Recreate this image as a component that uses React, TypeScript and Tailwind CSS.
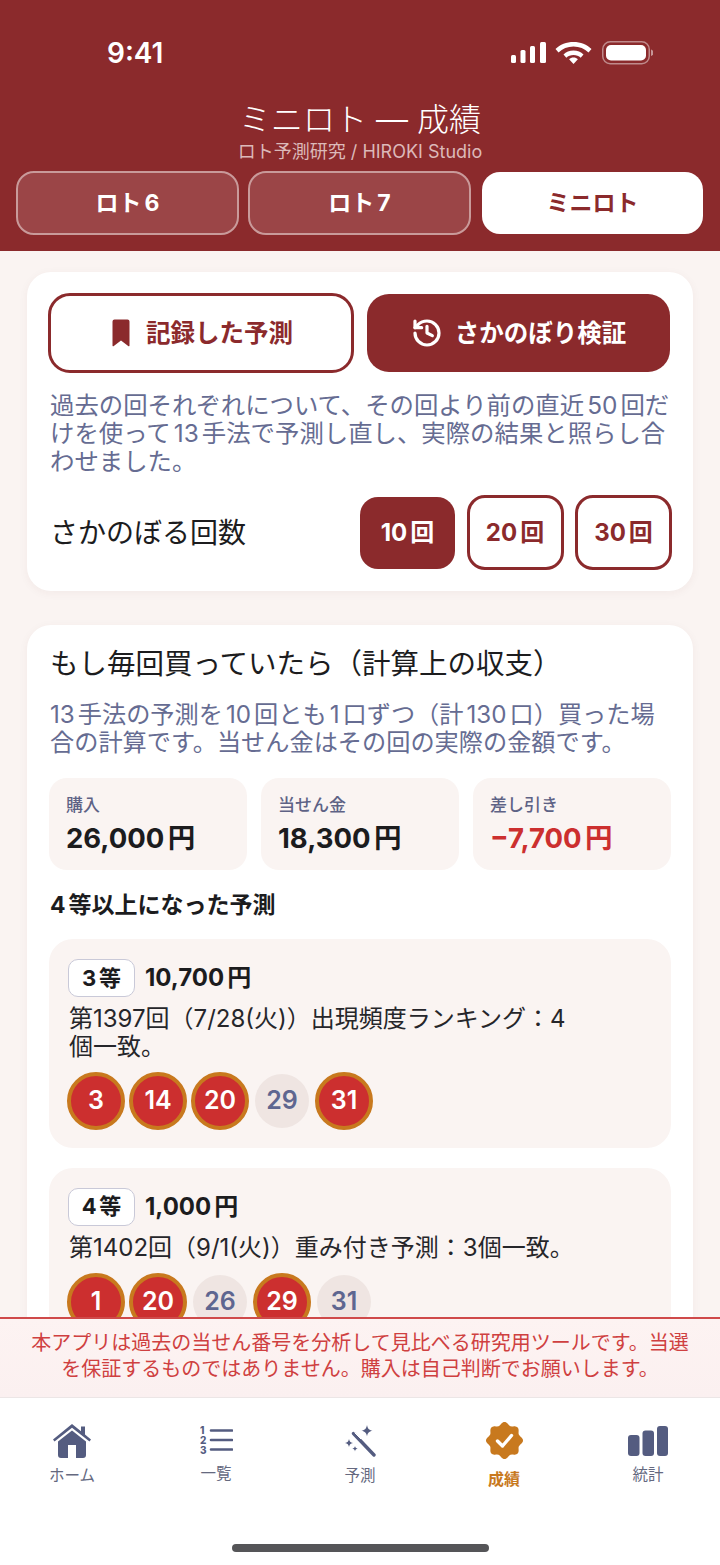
import { History } from "lucide-react";

const font = { fontFamily: '"Inter", "Noto Sans CJK JP", sans-serif' };

const results = [
  {
    grade: "3等",
    prize: "10,700円",
    text: "第1397回（7/28(火)）出現頻度ランキング：4個一致。",
    balls: [
      { n: 3, hit: true },
      { n: 14, hit: true },
      { n: 20, hit: true },
      { n: 29, hit: false },
      { n: 31, hit: true },
    ],
  },
  {
    grade: "4等",
    prize: "1,000円",
    text: "第1402回（9/1(火)）重み付き予測：3個一致。",
    balls: [
      { n: 1, hit: true },
      { n: 20, hit: true },
      { n: 26, hit: false },
      { n: 29, hit: true },
      { n: 31, hit: false },
    ],
  },
];

// wavy 8-lobed outline of the "verified" badge
const badgePath = (() => {
  const pts: string[] = [];
  for (let i = 0; i < 160; i++) {
    const t = (i / 160) * Math.PI * 2;
    const r = 17 + 1.500 * Math.cos(8 * t);
    const x = 18.500 + r * Math.sin(t);
    const y = 18.500 - r * Math.cos(t);
    pts.push(`${i === 0 ? "M" : "L"}${x.toFixed(2)} ${y.toFixed(2)}`);
  }
  return pts.join("") + "Z";
})();

function StatusBar() {
  return (
    <div className="flex h-[100px] items-start justify-between pl-[107px] pr-[67px] pt-[37px]">
      <span className="text-[28px] font-semibold leading-[32px] text-white">9:41</span>
      <svg width="143" height="24" viewBox="0 0 143 24" className="mt-[4px]" fill="white">
        <rect x="1" y="14" width="5" height="8" rx="1.500" />
        <rect x="10.500" y="9" width="5" height="13" rx="1.500" />
        <rect x="20" y="5" width="5" height="17" rx="1.500" />
        <rect x="30" y="1" width="6" height="21" rx="1.500" />
        <path d="M64 7.500c-6 0-11 2.200-15 6l-3-3.500C50.500 5.500 57 3 64 3c7 0 13.500 2.500 18 7l-3 3.500c-4-3.800-9-6-15-6z" transform="translate(-.5 -2)" />
        <path d="M64 11c-4 0-7.500 1.500-10 4l2.800 3.200c1.900-1.800 4.300-2.800 7.200-2.800s5.300 1 7.200 2.800L74 15c-2.500-2.500-6-4-10-4z" transform="translate(-.5 -1.500)" />
        <path d="M64 17.500c-1.800 0-3.200.7-4.400 1.700L64 24l4.400-4.800c-1.200-1-2.600-1.700-4.400-1.700z" transform="translate(-.5 -1)" />
        <rect x="92.750" y="0.750" width="46.500" height="22" rx="7.500" fill="none" stroke="white" strokeOpacity="0.45" strokeWidth="1.500" />
        <rect x="96" y="4" width="40" height="15.500" rx="5" />
        <path d="M141 8.500c1.500.5 2.500 1.700 2.500 3.200S142.500 14.500 141 15z" fillOpacity="0.5" />
      </svg>
    </div>
  );
}

function Ball({ n, hit }: { n: number; hit: boolean }) {
  return (
    <div className="flex h-[58px] w-[58px] items-center justify-center">
      {hit ? (
        <div className="flex h-[58px] w-[58px] items-center justify-center rounded-full border-[4px] border-[#c8791e] bg-[#cc2f2f] text-[25px] font-semibold text-white">
          {n}
        </div>
      ) : (
        <div className="flex h-[54px] w-[54px] items-center justify-center rounded-full bg-[#efe5e2] text-[25px] font-semibold text-[#5e6690]">
          {n}
        </div>
      )}
    </div>
  );
}

function ModeButton({ active, icon, label }: { active: boolean; icon: React.ReactNode; label: string }) {
  return (
    <button
      className={
        active
          ? "flex h-[78px] w-[303px] items-center justify-center gap-[12px] rounded-[22px] bg-[#8b2a2c] text-[24.500px] font-bold text-white"
          : "flex h-[80px] w-[306px] items-center justify-center gap-[12px] rounded-[22px] border-[3px] border-[#8b2a2c] bg-white text-[24.500px] font-bold text-[#8b2a2c]"
      }
    >
      {icon}
      {label}
    </button>
  );
}

function BookmarkIcon() {
  return (
    <svg width="25" height="28" viewBox="0 0 25 28" fill="#8b2a2c">
      <path d="M5.500.5h13a2 2 0 0 1 2 2v24a.8.8 0 0 1-1.300.6L12 21.500l-7.200 5.600a.8.8 0 0 1-1.300-.6v-24a2 2 0 0 1 2-2z" />
    </svg>
  );
}

function HomeIcon() {
  return (
    <svg width="38" height="34" viewBox="0 0 38 34" fill="#545c80">
      <path d="M0 15.500 19 0l9 7.300V2.500h4v8.100l6 4.900-1.500 2L19 3.700 1.500 17.500z" />
      <path fillRule="evenodd" d="M5 17.500 19 6.500l14 11V31a3 3 0 0 1-3 3H8a3 3 0 0 1-3-3zM15 21v13h8V21z" />
    </svg>
  );
}

function ListIcon() {
  return (
    <svg width="33" height="33" viewBox="0 -2 33 33">
      <g stroke="#545c80" strokeWidth="2.600" strokeLinecap="round">
        <path d="M11 4.500h21M11 14h21M11 23.500h21" />
      </g>
      <g fill="#545c80" fontSize="10" fontWeight="800" fontFamily="Inter, sans-serif">
        <text x="0" y="8">1</text>
        <text x="0" y="18">2</text>
        <text x="0" y="28">3</text>
      </g>
    </svg>
  );
}

function WandIcon() {
  return (
    <svg width="32" height="32" viewBox="0 0 32 32">
      <path d="M9.500 8.500 30 30" stroke="#545c80" strokeWidth="3.400" strokeLinecap="round" />
      <path d="M10.500 7.500 17 14" stroke="white" strokeWidth="1" />
      <g fill="#545c80">
        <path d="M23 0c.7 3.600 1.900 5 5.500 5.700-3.600.7-4.800 2-5.500 5.600-.7-3.600-1.900-4.900-5.500-5.600C21.100 5 22.300 3.600 23 0z" />
        <path d="M5 14c.5 2.500 1.300 3.500 4 4-2.700.5-3.500 1.500-4 4-.5-2.500-1.300-3.500-4-4 2.700-.5 3.500-1.500 4-4z" />
        <path d="M11 21c.3 1.700.9 2.300 2.700 2.700-1.800.3-2.400.9-2.700 2.700-.3-1.800-.9-2.400-2.700-2.700 1.800-.4 2.400-1 2.700-2.700z" />
      </g>
    </svg>
  );
}

function BadgeIcon() {
  return (
    <svg width="37" height="37" viewBox="0 0 37 37">
      <path fill="#c8791e" d={badgePath} />
      <path d="M11.500 19l5 5 9-10.500" fill="none" stroke="white" strokeWidth="3.400" strokeLinecap="round" strokeLinejoin="round" />
    </svg>
  );
}

function BarsIcon() {
  return (
    <svg width="40" height="30" viewBox="0 0 40 30" fill="#545c80">
      <rect x="0" y="9" width="11.500" height="21" rx="3" />
      <rect x="14.500" y="4.500" width="11.500" height="25.500" rx="3" />
      <rect x="29" y="0" width="11" height="30" rx="3" />
    </svg>
  );
}

export default function App() {
  return (
    <div className="flex h-[1565px] w-[720px] flex-col overflow-hidden bg-[#faf4f2] text-[#1c1c1e] [text-autospace:normal]" style={font}>
      {/* Header */}
      <header className="h-[251px] shrink-0 bg-[#8b2a2c]">
        <StatusBar />
        <div className="text-center">
          <h1 className="text-[32px] font-light leading-[40px] text-white">ミニロト — 成績</h1>
          <p className="mt-[1px] text-[18px] leading-[21px] text-[#dcb9b9]">ロト予測研究 / HIROKI Studio</p>
        </div>
        <div className="mt-[9px] flex items-center gap-[9px] pl-[16px]">
          <button className="h-[64px] w-[223px] rounded-[18px] border-2 border-[#c99a9a] bg-[#9b4547] text-[23px] font-bold text-white">ロト6</button>
          <button className="h-[64px] w-[223px] rounded-[18px] border-2 border-[#c99a9a] bg-[#9b4547] text-[23px] font-bold text-white">ロト7</button>
          <button className="ml-[2px] h-[62px] w-[221px] rounded-[18px] bg-white text-[23px] font-bold text-[#8b2a2c]">ミニロト</button>
        </div>
      </header>

      {/* Scrolling content */}
      <main className="min-h-0 flex-1 overflow-hidden px-[27px] pt-[21px]">
        <section className="rounded-[24px] bg-white pb-[21px] pl-[21px] pr-[21px] pt-[21px] shadow-[0_2px_10px_rgba(90,40,40,0.05)]">
          <div className="flex items-center gap-[13px]">
            <ModeButton active={false} icon={<BookmarkIcon />} label="記録した予測" />
            <ModeButton active icon={<History size={32} strokeWidth={2.400} />} label="さかのぼり検証" />
          </div>
          <p className="mt-[18px] pl-[2px] text-[24.400px] leading-[28px] text-[#666c92]">
            過去の回それぞれについて、その回より前の直近50回だけを使って13手法で予測し直し、実際の結果と照らし合わせました。
          </p>
          <div className="mt-[20px] flex items-center justify-between">
            <span className="pl-[2px] text-[28px] leading-[32px]">さかのぼる回数</span>
            <div className="flex items-center gap-[11.500px]">
              <button className="h-[72px] w-[95px] rounded-[18px] bg-[#8b2a2c] text-[24px] font-bold text-white">10回</button>
              <button className="h-[75px] w-[97px] rounded-[18px] border-[3px] border-[#8b2a2c] bg-white text-[24px] font-bold text-[#8b2a2c]">20回</button>
              <button className="h-[75px] w-[97px] rounded-[18px] border-[3px] border-[#8b2a2c] bg-white text-[24px] font-bold text-[#8b2a2c]">30回</button>
            </div>
          </div>
        </section>

        <section className="mt-[34px] rounded-[24px] bg-white px-[22px] pt-[21px] shadow-[0_2px_10px_rgba(90,40,40,0.05)]">
          <h2 className="pl-[1px] text-[28.500px] leading-[36px]">もし毎回買っていたら（計算上の収支）</h2>
          <p className="mt-[19px] pl-[1px] text-[24.200px] leading-[28px] text-[#666c92]">
            13手法の予測を10回とも1口ずつ（計130口）買った場合の計算です。当せん金はその回の実際の金額です。
          </p>
          <div className="mt-[21px] grid grid-cols-3 gap-[14px]">
            {[
              { label: "購入", value: "26,000円", color: "text-[#1c1c1e]" },
              { label: "当せん金", value: "18,300円", color: "text-[#1c1c1e]" },
              { label: "差し引き", value: "−7,700円", color: "text-[#cc2f2f]" },
            ].map((s) => (
              <div key={s.label} className="h-[92px] rounded-[18px] bg-[#faf4f2] px-[17px] pt-[16px]">
                <div className="text-[17px] font-medium leading-[22px] text-[#5e6285]">{s.label}</div>
                <div className={`mt-[6px] text-[27.500px] font-bold leading-[32px] ${s.color}`}>{s.value}</div>
              </div>
            ))}
          </div>
          <h3 className="mt-[21px] pl-[1px] text-[23px] font-bold leading-[28px]">4等以上になった予測</h3>
          <div className="mt-[20px] flex flex-col gap-[19.500px]">
            {results.map((r) => (
              <div key={r.grade} className="rounded-[24px] bg-[#faf4f2] px-[19px] pb-[18px] pt-[20px]">
                <div className="flex items-center gap-[10px]">
                  <span className="flex h-[38px] w-[67px] items-center justify-center rounded-[10px] border border-[#c9c9d8] bg-white text-[22px] font-bold">{r.grade}</span>
                  <span className="text-[24px] font-bold">{r.prize}</span>
                </div>
                <p className="mt-[8px] w-[506px] pl-[1px] text-[24px] leading-[28px] text-[#26262a] [text-autospace:no-autospace]">{r.text}</p>
                <div className="mt-[11px] -ml-[1px] flex gap-[4px]">
                  {r.balls.map((b) => (
                    <Ball key={b.n} n={b.n} hit={b.hit} />
                  ))}
                </div>
              </div>
            ))}
          </div>
        </section>
      </main>

      {/* Disclaimer */}
      <div className="relative z-10 h-[80px] shrink-0 border-t-2 border-[#cf4a4a] bg-gradient-to-b from-[#fdf3f2] to-[#fbf0f0] px-[28px] pt-[11px] text-center text-[20px] leading-[26px] text-[#cf4040]">
        本アプリは過去の当せん番号を分析して見比べる研究用ツールです。当選を保証するものではありません。購入は自己判断でお願いします。
      </div>

      {/* Bottom nav */}
      <nav className="relative h-[168px] shrink-0 border-t border-[#ece6e6] bg-white">
        <div className="grid grid-cols-5 pt-[24px]">
          <div className="flex flex-col items-center">
            <div className="flex h-[36px] items-end"><HomeIcon /></div>
            <span className="mt-[8px] text-[15.500px] leading-[20px] text-[#65697f]">ホーム</span>
          </div>
          <div className="flex flex-col items-center">
            <div className="flex h-[35px] items-end"><ListIcon /></div>
            <span className="mt-[7px] text-[15.500px] leading-[20px] text-[#65697f]">一覧</span>
          </div>
          <div className="flex flex-col items-center">
            <div className="flex h-[35px] items-end"><WandIcon /></div>
            <span className="mt-[9px] text-[15.500px] leading-[20px] text-[#65697f]">予測</span>
          </div>
          <div className="flex flex-col items-center">
            <div className="flex h-[37px] items-end"><BadgeIcon /></div>
            <span className="mt-[10px] text-[16px] font-bold leading-[20px] text-[#c8791e]">成績</span>
          </div>
          <div className="flex flex-col items-center">
            <div className="flex h-[34px] items-end"><BarsIcon /></div>
            <span className="mt-[9px] text-[15.500px] leading-[20px] text-[#65697f]">統計</span>
          </div>
        </div>
        <div className="absolute bottom-[13px] left-[232px] h-[8px] w-[257px] rounded-full bg-[#555558]" />
      </nav>
    </div>
  );
}
